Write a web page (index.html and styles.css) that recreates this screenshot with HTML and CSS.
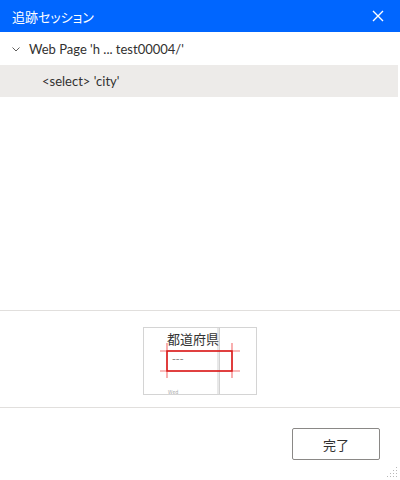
FILE: index.html
```html
<!DOCTYPE html>
<html>
	<head>
		<meta charset="utf-8" />
		<title>追跡セッション</title>
		<link rel="stylesheet" href="styles.css">
	</head>
	<body>
		<div class="dialog">
			<div class="header">
				<span class="title">追跡セッション</span>
				<svg class="close" width="12" height="12" viewBox="0 0 12 12">
					<path d="M1 1L11 11M11 1L1 11" stroke="#fff" stroke-width="1.4" fill="none"/>
				</svg>
			</div>
			<div class="tree">
				<div class="row">
					<svg class="chevron" width="8" height="5" viewBox="0 0 8 5">
						<path d="M0.5 0.5L4 4L7.5 0.5" stroke="#605e5c" stroke-width="1" fill="none"/>
					</svg>
					<span>Web Page 'h ... test00004/'</span>
				</div>
				<div class="row child selected">
					<span>&lt;select&gt; 'city'</span>
				</div>
			</div>
			<div class="preview">
				<svg class="thumb" width="114" height="68" viewBox="0 0 114 68">
					<rect x="0.5" y="0.5" width="113" height="67" fill="#fff" stroke="#d4d4d4"/>
					<rect x="74" y="1" width="2" height="66" fill="#e8e8e8"/>
					<rect x="76" y="1" width="1" height="66" fill="#d2d2d2"/>
					<text x="24" y="17" class="t-label">都道府県</text>
					<text x="29" y="36" class="t-dash">---</text>
					<text x="25" y="67" class="t-faint">Wed</text>
					<path d="M17 24H97M17 44H97M24 16V51M89 16V51" stroke="#f04040" stroke-opacity="0.7" stroke-width="1.2"/>
					<rect x="24" y="24" width="65" height="20" fill="none" stroke="#d81818" stroke-width="1.5"/>
				</svg>
			</div>
			<div class="footer">
				<button class="btn">完了</button>
			</div>
			<svg class="grip" width="12" height="12" viewBox="0 0 12 12">
				<g fill="#b8b8b8">
					<rect x="10" y="1" width="1" height="1"/>
					<rect x="7" y="4" width="1" height="1"/>
					<rect x="10" y="4" width="1" height="1"/>
					<rect x="4" y="7" width="1" height="1"/>
					<rect x="7" y="7" width="1" height="1"/>
					<rect x="10" y="7" width="1" height="1"/>
					<rect x="1" y="10" width="1" height="1"/>
					<rect x="4" y="10" width="1" height="1"/>
					<rect x="7" y="10" width="1" height="1"/>
					<rect x="10" y="10" width="1" height="1"/>
				</g>
			</svg>
		</div>
	</body>
</html>
```
FILE: styles.css
```css
*{
	margin: 0;
	padding: 0;
	box-sizing: border-box;
}
body{
	font-family: Lato, "Noto Sans CJK JP", sans-serif;
	color: #323130;
	background: #fff;
}
.dialog{
	width: 400px;
	height: 480px;
	display: flex;
	flex-direction: column;
	position: relative;
}
.header{
	height: 32px;
	background-color: #0066ff;
	color: #fff;
	display: flex;
	align-items: center;
	justify-content: space-between;
	padding: 0 16px 0 12px;
}
.title{
	font-family: "Noto Sans CJK JP", sans-serif;
	font-size: 13px;
	font-feature-settings: "palt";
}
.tree{
	flex: 1;
	padding-top: 1px;
	border-bottom: 1px solid #e1dfdd;
}
.row{
	height: 32px;
	display: flex;
	align-items: center;
	font-size: 13px;
	padding-left: 12px;
}
.chevron{
	margin-right: 9px;
}
.child{
	padding-left: 42px;
}
.selected{
	background-color: #edebe9;
	margin-right: 2px;
}
.preview{
	height: 97px;
	display: flex;
	justify-content: center;
	align-items: flex-start;
	padding-top: 16px;
	border-bottom: 1px solid #e1dfdd;
}
.thumb text{
	font-family: "Noto Sans CJK JP", sans-serif;
}
.t-label{
	font-size: 13px;
	fill: #333;
}
.t-dash{
	font-size: 11px;
	fill: #777;
}
.t-faint{
	font-size: 5px;
	fill: #aaa;
}
.footer{
	height: 72px;
	display: flex;
	justify-content: flex-end;
	align-items: flex-start;
	padding: 20px 20px 0 0;
}
.btn{
	width: 88px;
	height: 32px;
	border: 1px solid #8a8886;
	border-radius: 2px;
	background: #fff;
	color: #323130;
	font-family: "Noto Sans CJK JP", sans-serif;
	font-size: 13px;
}
.grip{
	position: absolute;
	right: 2px;
	bottom: 2px;
}
```
